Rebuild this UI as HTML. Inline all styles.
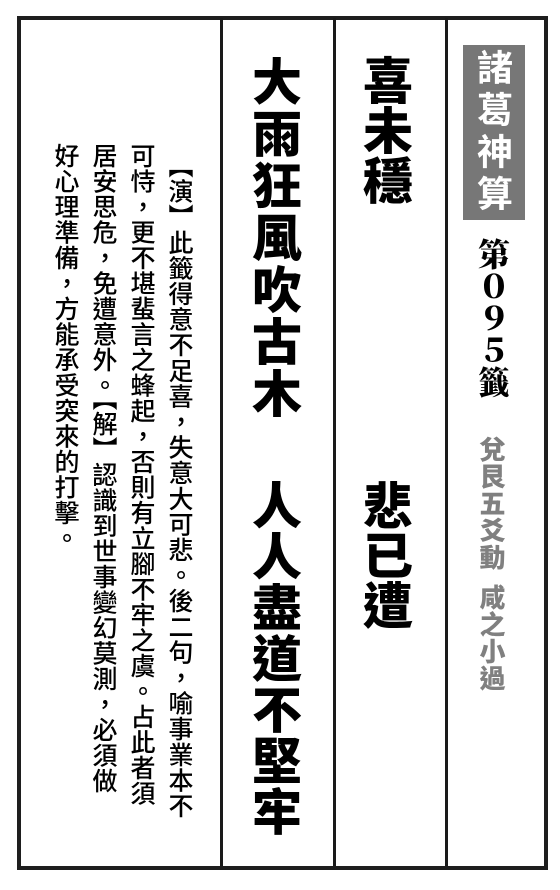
<!DOCTYPE html>
<html><head><meta charset="utf-8"><style>
html,body{margin:0;padding:0;background:#fff;}
body{width:560px;height:890px;position:relative;overflow:hidden;}
.box{position:absolute;left:17px;top:16px;width:523px;height:846px;border:4px solid #1e1e1e;}
.div{position:absolute;top:18px;width:3px;height:848px;background:#1a1a1a;}
.v{position:absolute;writing-mode:vertical-rl;white-space:nowrap;}
.big{font-family:"Noto Sans CJK TC","Noto Serif CJK SC",sans-serif;font-weight:900;font-size:50px;line-height:50px;color:#000;}
.sm{font-family:"Noto Sans CJK TC",sans-serif;font-size:25px;line-height:26px;color:#000;font-weight:500;}
</style></head><body lang="zh-TW">
<div class="box"></div>
<div class="div" style="left:220px"></div>
<div class="div" style="left:333px"></div>
<div class="div" style="left:445px"></div>

<div style="position:absolute;left:463px;top:45px;width:62px;height:175px;background:#777;"></div>
<div class="v" style="left:475px;top:49px;font-family:'Noto Sans CJK TC',sans-serif;font-weight:700;font-size:36px;line-height:40px;letter-spacing:6px;color:#fff;">諸葛神算</div>

<div class="v" style="left:476px;top:238px;font-family:'Liberation Serif','Noto Serif CJK SC',serif;font-weight:900;font-size:32px;line-height:32px;color:#000;">第０９５籤</div>
<div class="v" style="left:479px;top:436px;font-family:'Noto Sans CJK TC',sans-serif;font-weight:900;font-size:26px;line-height:26px;letter-spacing:1px;color:#808080;">兌艮五爻動<span style="display:inline-block;height:13px"></span>咸之小過</div>

<div class="big v" style="left:363px;top:55px;letter-spacing:0px;">喜未穩</div>
<div class="big v" style="left:363px;top:480px;">悲已遭</div>

<div class="big v" style="left:252px;top:56px;letter-spacing:2px;">大雨狂風吹古木</div>
<div class="big v" style="left:252px;top:480px;letter-spacing:1px;">人人盡道不堅牢</div>

<div class="v sm" style="left:168px;top:153px;letter-spacing:0.6px;">【演】此籤得意不足喜，失意大可悲。後二句，喻事業本不</div>
<div class="v sm" style="left:130px;top:143px;letter-spacing:0.5px;">可恃，更不堪蜚言之蜂起，否則有立腳不牢之虞。占此者須</div>
<div class="v sm" style="left:92px;top:143px;letter-spacing:0.5px;">居安思危，免遭意外。【解】認識到世事變幻莫測，必須做</div>
<div class="v sm" style="left:54px;top:143px;letter-spacing:0.5px;">好心理準備，方能承受突來的打擊。</div>
</body></html>
